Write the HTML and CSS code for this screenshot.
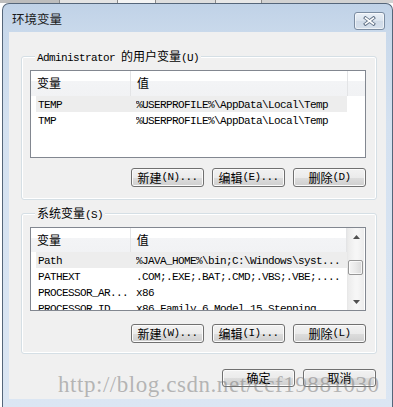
FILE: index.html
```html
<!DOCTYPE html>
<html lang="zh-CN">
<head>
<meta charset="utf-8">
<title>环境变量</title>
<link rel="stylesheet" href="styles.css">
</head>
<body>
<div class="strip"><span class="s1"></span><span class="s2"></span><span class="s3"></span><span class="s4"></span><span class="s5"></span></div>
<div class="window">
  <div class="titlebar">
    <span class="title">环境变量</span>
    <span class="close"><svg width="13" height="10" viewBox="0 0 13 10"><path d="M2.5 2 L10.5 8 M10.5 2 L2.5 8" stroke="#5f6f84" stroke-width="3.4" stroke-linecap="square" fill="none"/><path d="M2.5 2 L10.5 8 M10.5 2 L2.5 8" stroke="#ffffff" stroke-width="1.6" stroke-linecap="square" fill="none"/></svg></span>
  </div>
  <div class="client">
    <div class="group g1">
      <div class="legend"><span class="m">Administrator </span><span>的用户变量</span><span class="m">(U)</span></div>
      <div class="list l1">
        <div class="hdr"><div class="hc c1">变量</div><div class="hc c2">值</div><div class="hc c3"></div></div>
        <div class="row sel"><span class="k m">TEMP</span><span class="v m">%USERPROFILE%\AppData\Local\Temp</span></div>
        <div class="row"><span class="k m">TMP</span><span class="v m">%USERPROFILE%\AppData\Local\Temp</span></div>
      </div>
      <div class="btns">
        <div class="btn"><span>新建</span><span class="m">(N)...</span></div>
        <div class="btn"><span>编辑</span><span class="m">(E)...</span></div>
        <div class="btn"><span>删除</span><span class="m">(D)</span></div>
      </div>
    </div>
    <div class="group g2">
      <div class="legend"><span>系统变量</span><span class="m">(S)</span></div>
      <div class="list l2">
        <div class="main">
          <div class="hdr"><div class="hc c1">变量</div><div class="hc c2">值</div></div>
          <div class="row sel"><span class="k m">Path</span><span class="v m">%JAVA_HOME%\bin;C:\Windows\syst...</span></div>
          <div class="row"><span class="k m">PATHEXT</span><span class="v m">.COM;.EXE;.BAT;.CMD;.VBS;.VBE;....</span></div>
          <div class="row"><span class="k m">PROCESSOR_AR...</span><span class="v m">x86</span></div>
          <div class="row"><span class="k m">PROCESSOR_ID</span><span class="v m">x86 Family 6 Model 15 Stepping</span></div>
        </div>
        <div class="sb">
          <div class="sbb"><svg width="7" height="4" viewBox="0 0 7 4"><path d="M0 4 L3.5 0 L7 4 Z" fill="#505050"/></svg></div>
          <div class="track"><div class="thumb"></div></div>
          <div class="sbb"><svg width="7" height="4" viewBox="0 0 7 4"><path d="M0 0 L7 0 L3.5 4 Z" fill="#505050"/></svg></div>
        </div>
      </div>
      <div class="btns">
        <div class="btn"><span>新建</span><span class="m">(W)...</span></div>
        <div class="btn"><span>编辑</span><span class="m">(I)...</span></div>
        <div class="btn"><span>删除</span><span class="m">(L)</span></div>
      </div>
    </div>
    <div class="footer">
      <div class="btn ok"><span>确定</span></div>
      <div class="btn ok"><span>取消</span></div>
    </div>
  </div>
</div>
<div class="watermark">http://blog.csdn.net/ccf19881030</div>
</body>
</html>
```
FILE: styles.css
```css
* { box-sizing: border-box; margin: 0; padding: 0; }
html, body { width: 393px; height: 407px; overflow: hidden; background: #ffffff; }
body {
  position: relative;
  font-family: "Noto Sans CJK SC", sans-serif;
  font-size: 12px;
  color: #000000;
}
.m {
  font-family: "Liberation Mono", "Noto Sans CJK SC", monospace;
  font-size: 11px;
  letter-spacing: -0.6px;
  white-space: pre;
}

/* strip of background content above the dialog */
.strip { height: 3px; display: flex; background: #d2d2d2; }
.strip span { height: 3px; border-right: 1px solid #8c8c8c; }
.strip .s1 { width: 60px; background: #bdbdbd; }
.strip .s2 { width: 58px; background: #e4e4e4; }
.strip .s3 { width: 38px; background: #f4f4f4; }
.strip .s4 { width: 60px; background: #dedede; }
.strip .s5 { width: 46px; background: #e8e8e8; }

/* window frame */
.window {
  margin-left: 2px;
  width: 391px;
  height: 404px;
  border: 1px solid #55667a;
  border-bottom: none;
  border-radius: 7px 7px 0 0;
  background: linear-gradient(#c0d2e7 0px, #c9d9eb 28px, #d4e1f0 120px, #dbe6f3 404px);
  padding: 0 6px;
  display: flex;
  flex-direction: column;
}
.titlebar {
  height: 28px;
  display: flex;
  justify-content: space-between;
  align-items: flex-start;
  padding-left: 3px;
}
.title {
  font-size: 12.5px;
  line-height: 16px;
  margin-top: 7px;
  color: #1b1b1b;
}
.close {
  width: 31px;
  height: 18px;
  margin-top: 8px;
  margin-right: 1px;
  border: 1px solid #7b8ca1;
  border-radius: 3px;
  background: linear-gradient(#e9eff6, #dbe4ee 50%, #cfdae7 51%, #d6e0ec);
  box-shadow: inset 0 0 0 1px rgba(255,255,255,0.6);
  display: flex;
  align-items: center;
  justify-content: center;
}
.close svg { display: block; }

/* client area */
.client {
  height: 367px;
  background: #f0f0f0;
  padding: 24px 9px 0 12px;
  display: flex;
  flex-direction: column;
}

/* group box */
.group {
  border: 1px solid #d5dfe5;
  border-radius: 3px;
  box-shadow: inset 0 0 0 1px #ffffff;
  padding: 0 10px 0 8px;
  display: flex;
  flex-direction: column;
}
.g1 { padding-bottom: 12px; }
.g2 { margin-top: 13px; padding-bottom: 10px; }
.legend {
  align-self: flex-start;
  height: 14px;
  line-height: 14px;
  margin: -8px 0 0 5px;
  padding: 0 2px;
  background: #f0f0f0;
  white-space: nowrap;
}

/* list view */
.list {
  margin-top: 7px;
  border: 1px solid #828790;
  background: #ffffff;
  overflow: hidden;
}
.l1 { height: 88px; }
.l2 { height: 84px; display: flex; }
.main { width: 316px; }
.hdr {
  display: flex;
  height: 24px;
  background: linear-gradient(#ffffff 0, #ffffff 40%, #f3f4f6 41%, #f1f2f4 100%);
}
.l1 .hdr { height: 25px; }
.hc {
  border-right: 1px solid #e3e4e6;
  padding-left: 6px;
  line-height: 24px;
  white-space: nowrap;
}
.c1 { width: 100px; }
.c2 { width: 217px; }
.c3 { flex: 1; border-right: none; }
.row {
  display: flex;
  height: 16px;
  line-height: 18px;
  margin-left: 5px;
  width: 311px;
  white-space: nowrap;
}
.row.sel { background: #ededed; }
.k { width: 100px; padding-left: 2px; overflow: hidden; }
.v { flex: 1; overflow: hidden; }

/* scrollbar */
.sb {
  width: 17px;
  display: flex;
  flex-direction: column;
  border-left: 1px solid #e8e8e8;
  background: linear-gradient(to right, #ebebeb, #f6f6f6 45%, #f6f6f6 60%, #ececec);
}
.sbb {
  height: 17px;
  display: flex;
  align-items: center;
  justify-content: center;
}
.sbb svg { display: block; }
.track { flex: 1; padding: 15px 0 0 0; }
.thumb {
  height: 15px;
  margin: 0 1px 0 0;
  border: 1px solid #979797;
  border-radius: 2px;
  background: linear-gradient(to right, #f4f4f4, #e9e9e9 50%, #d9d9d9);
  box-shadow: inset 0 0 0 1px rgba(255,255,255,0.7);
}

/* buttons */
.btns {
  display: flex;
  justify-content: flex-end;
  gap: 8px;
  margin-top: 10px;
}
.g2 .btns { margin-top: 13px; }
.btn {
  width: 73px;
  height: 19px;
  border: 1px solid #707070;
  border-radius: 3px;
  background: linear-gradient(#f2f2f2 0%, #ebebeb 50%, #dddddd 51%, #cfcfcf 100%);
  box-shadow: inset 0 0 0 1px #fbfbfb;
  display: flex;
  align-items: center;
  justify-content: center;
  line-height: 17px;
  white-space: nowrap;
}
.footer {
  display: flex;
  justify-content: flex-end;
  gap: 8px;
  margin: 15px 1px 0 0;
}
.btn.ok { height: 18px; line-height: 16px; }

/* watermark overlay */
.watermark {
  position: absolute;
  left: 58px;
  top: 373px;
  font-family: "Liberation Serif", serif;
  font-size: 23px;
  line-height: 23px;
  letter-spacing: 0.55px;
  color: rgba(120, 120, 120, 0.5);
  white-space: nowrap;
}
```
